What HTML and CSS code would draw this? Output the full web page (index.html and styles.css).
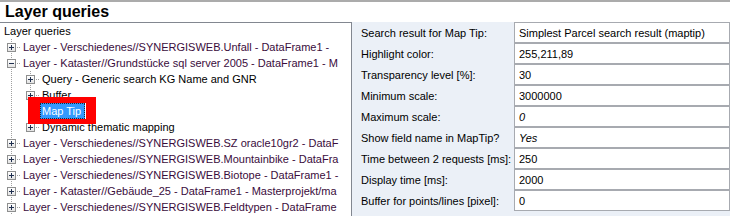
FILE: index.html
```html
<!DOCTYPE html>
<html>
<head>
<meta charset="utf-8">
<link rel="stylesheet" href="styles.css">
</head>
<body>
<div class="window">
  <div class="header">Layer queries</div>
  <div class="body">
    <div class="tree">
      <div class="row"><span class="label">Layer queries</span></div>
      <div class="row"><span class="cell c-t"><i class="box plus"></i></span><span class="label layer">Layer - Verschiedenes//SYNERGISWEB.Unfall - DataFrame1 -</span></div>
      <div class="row"><span class="cell c-t"><i class="box"></i></span><span class="label layer">Layer - Kataster//Grundstücke sql server 2005 - DataFrame1 - M</span></div>
      <div class="row"><span class="cell c-v"></span><span class="cell c-t"><i class="box plus"></i></span><span class="label">Query - Generic search KG Name and GNR</span></div>
      <div class="row"><span class="cell c-v"></span><span class="cell c-t"><i class="box plus"></i></span><span class="label">Buffer</span></div>
      <div class="row"><span class="cell c-v"></span><span class="cell c-t"></span><span class="label selected">Map Tip</span></div>
      <div class="row"><span class="cell c-v"></span><span class="cell c-l"><i class="box plus"></i></span><span class="label">Dynamic thematic mapping</span></div>
      <div class="row"><span class="cell c-t"><i class="box plus"></i></span><span class="label layer">Layer - Verschiedenes//SYNERGISWEB.SZ oracle10gr2 - DataF</span></div>
      <div class="row"><span class="cell c-t"><i class="box plus"></i></span><span class="label layer">Layer - Verschiedenes//SYNERGISWEB.Mountainbike - DataFra</span></div>
      <div class="row"><span class="cell c-t"><i class="box plus"></i></span><span class="label layer">Layer - Verschiedenes//SYNERGISWEB.Biotope - DataFrame1 -</span></div>
      <div class="row"><span class="cell c-t"><i class="box plus"></i></span><span class="label layer">Layer - Kataster//Gebäude_25 - DataFrame1 - Masterprojekt/ma</span></div>
      <div class="row"><span class="cell c-t"><i class="box plus"></i></span><span class="label layer">Layer - Verschiedenes//SYNERGISWEB.Feldtypen - DataFrame</span></div>
      <div class="annot"></div>
    </div>
    <div class="grid">
      <div class="prow"><div class="pname">Search result for Map Tip:</div><div class="pval">Simplest Parcel search result (maptip)</div></div>
      <div class="prow"><div class="pname">Highlight color:</div><div class="pval">255,211,89</div></div>
      <div class="prow"><div class="pname">Transparency level [%]:</div><div class="pval">30</div></div>
      <div class="prow"><div class="pname">Minimum scale:</div><div class="pval">3000000</div></div>
      <div class="prow"><div class="pname">Maximum scale:</div><div class="pval italic">0</div></div>
      <div class="prow"><div class="pname">Show field name in MapTip?</div><div class="pval italic">Yes</div></div>
      <div class="prow"><div class="pname">Time between 2 requests [ms]:</div><div class="pval">250</div></div>
      <div class="prow"><div class="pname">Display time [ms]:</div><div class="pval">2000</div></div>
      <div class="prow"><div class="pname">Buffer for points/lines [pixel]:</div><div class="pval">0</div></div>
    </div>
  </div>
</div>
</body>
</html>
```

FILE: styles.css
```css
* { box-sizing: border-box; }
html, body { margin: 0; padding: 0; background: #ffffff; }
body {
  font-family: "Liberation Sans", Arial, sans-serif;
  font-size: 11px;
  color: #000;
}
.window {
  width: 730px;
  height: 216px;
  overflow: hidden;
  background: #ffffff;
}
.header {
  height: 22px;
  border-top: 2px solid #ababab;
  padding-left: 5px;
  font-size: 16px;
  font-weight: bold;
  line-height: 19px;
  color: #000;
}
.body {
  display: flex;
  height: 194px;
}
.tree {
  position: relative;
  width: 352px;
  flex: none;
  border-top: 1px solid #828790;
  border-right: 1px solid #828790;
  padding-left: 2px;
  overflow: hidden;
  background: #fff;
}
.row {
  display: flex;
  height: 16px;
  line-height: 16px;
  white-space: nowrap;
}
.cell {
  flex: none;
  width: 19px;
  height: 16px;
}
.c-v {
  background: repeating-linear-gradient(to bottom, #a0a0a0 0 1px, transparent 1px 2px) no-repeat 9px 0 / 1px 16px;
}
.c-t {
  background:
    repeating-linear-gradient(to bottom, #a0a0a0 0 1px, transparent 1px 2px) no-repeat 9px 0 / 1px 16px,
    repeating-linear-gradient(to right, #a0a0a0 0 1px, transparent 1px 2px) no-repeat 9px 8px / 10px 1px;
}
.c-l {
  background:
    repeating-linear-gradient(to bottom, #a0a0a0 0 1px, transparent 1px 2px) no-repeat 9px 0 / 1px 9px,
    repeating-linear-gradient(to right, #a0a0a0 0 1px, transparent 1px 2px) no-repeat 9px 8px / 10px 1px;
}
.box {
  display: block;
  width: 9px;
  height: 9px;
  margin: 4px 0 0 5px;
  border: 1px solid #8e8f8f;
  background:
    linear-gradient(#1f2f4f, #1f2f4f) no-repeat 1px 3px / 5px 1px,
    linear-gradient(#ffffff, #e3e3e3);
}
.box.plus {
  background:
    linear-gradient(#1f2f4f, #1f2f4f) no-repeat 1px 3px / 5px 1px,
    linear-gradient(#1f2f4f, #1f2f4f) no-repeat 3px 1px / 1px 5px,
    linear-gradient(#ffffff, #e3e3e3);
}
.label {
  padding: 0 2px;
  height: 16px;
}
.layer { color: #3a0c3c; }
.selected {
  background: #3399ff;
  color: #fff;
  padding: 0 4px 0 2px;
  outline: 1px dotted #1a2a3a;
  outline-offset: -1px;
}
.annot {
  position: absolute;
  left: 28px;
  top: 74px;
  width: 68px;
  height: 27px;
  border-style: solid;
  border-color: #ff0000;
  border-width: 6px 10px 5px 12px;
}
.grid {
  flex: 1;
  display: flex;
  flex-direction: column;
  background: #ebf0f7;
}
.prow {
  display: flex;
  height: 21px;
  flex: none;
}
.pname {
  width: 162px;
  flex: none;
  padding: 3px 0 0 9px;
  line-height: 16px;
  white-space: nowrap;
}
.pval {
  flex: 1;
  border: 1px solid #a7aab0;
  background: #fff;
  padding: 2px 0 0 4px;
  line-height: 16px;
  white-space: nowrap;
  overflow: hidden;
}
.italic { font-style: italic; }
```
